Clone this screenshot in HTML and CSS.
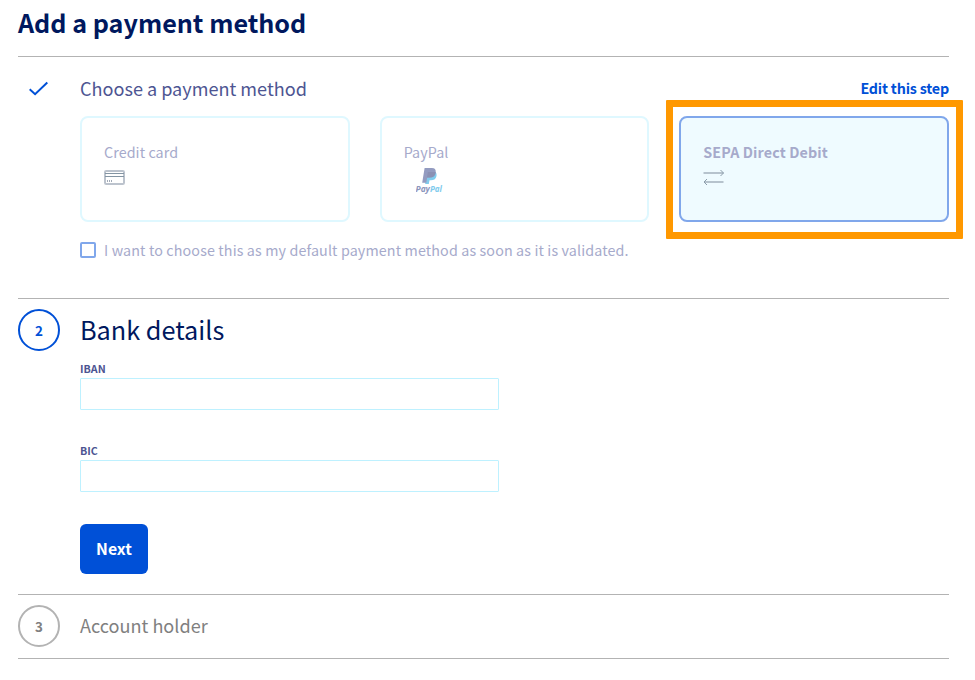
FILE: index.html
```html
<!DOCTYPE html>
<html lang="en">
<head>
<meta charset="utf-8">
<title>Add a payment method</title>
<link rel="stylesheet" href="styles.css">
</head>
<body>
<main>
  <h1><span>Add a payment method</span></h1>
  <section class="step step-choose">
    <div class="marker"><svg class="check" width="20" height="16" viewBox="0 0 20 16"><path d="M1.7 8.2 7.1 13.2 19.3 1.5" fill="none" stroke="#0050d7" stroke-width="2"/></svg></div>
    <div class="content">
      <div class="step-head"><h2 class="done-title"><span>Choose a payment method</span></h2><a class="edit"><span>Edit this step</span></a></div>
      <div class="cards">
        <div class="card"><div class="inner"><span class="name">Credit card</span>
          <svg class="icon" width="22" height="16" viewBox="0 0 22 16"><rect x="1" y="1" width="19" height="13" rx="1.2" fill="none" stroke="#bcc3cd" stroke-width="2"/><path d="M1 3.5h19M1 6.5h19" stroke="#8495a3"/><path d="M3.5 10v2M5.5 10v2M7.5 10v2" stroke="#a2abb8"/></svg></div></div>
        <div class="card"><div class="inner"><span class="name">PayPal</span>
          <svg class="paypal" width="30" height="28" viewBox="0 0 30 28"><path d="M10.5 4.5h8.5q2.3 2 1.3 5.2-1 3.6-5.4 3.6h-1.4l-.7 3.7H9.2z" fill="#80cbed"/><path d="M8.6 1h7.3q4.3 0 3.8 4.4-.9 5.1-6.2 5.1h-2.3l-.9 5.2H6.2z" fill="#939bc0"/><path d="M11.8 5h7.8q0 5.5-6.1 5.5h-2.6z" fill="#8b90b3"/><text x="-.5" y="25" textLength="14.5" lengthAdjust="spacingAndGlyphs" fill="#8b95bc">Pay</text><text x="14" y="25" textLength="12" lengthAdjust="spacingAndGlyphs" fill="#80cbed">Pal</text></svg></div></div>
        <div class="card selected"><div class="inner"><span class="name">SEPA Direct Debit</span>
          <svg class="icon" width="22" height="16" viewBox="0 0 22 16"><path d="M.5 4h20M1.5 13h19" stroke="#b6c3cd" stroke-width="2"/><path d="m17.5 1 3 3-3 3M4 10l-3 3 3 3" fill="none" stroke="#8c9dab"/></svg></div><div class="highlight"></div></div>
      </div>
      <label class="default"><input type="checkbox"><span>I want to choose this as my default payment method as soon as it is validated.</span></label>
    </div>
  </section>
  <section class="step step-bank">
    <div class="marker"><div class="circle">2</div></div>
    <div class="content">
      <h2 class="active-title"><span>Bank details</span></h2>
      <label class="field"><span>IBAN</span><input type="text"></label>
      <label class="field"><span>BIC</span><input type="text"></label>
      <button type="button"><span>Next</span></button>
    </div>
  </section>
  <section class="step step-holder">
    <div class="marker"><div class="circle idle">3</div></div>
    <div class="content"><h2 class="idle-title"><span>Account holder</span></h2></div>
  </section>
</main>
</body>
</html>
```
FILE: styles.css
```css
* { box-sizing: border-box; }
body { margin: 0; background: #fff; font-family: "Noto Sans CJK SC", "Open Sans", sans-serif; color: #00185e; }
main { padding: 0 26px 0 18px; }
h1, h2 { margin: 0; }
h1 { height: 56px; font-size: 25.15px; line-height: 45px; font-weight: 700; }
.step { display: grid; grid-template-columns: 42px 1fr; column-gap: 20px; border-top: 1px solid #b3b3b3; }
.step-choose { height: 242px; }
.step-bank { height: 296px; }
.step-holder { height: 65px; border-bottom: 1px solid #b3b3b3; }
.marker { padding-top: 10px; }
.check { display: block; margin: 14px 0 0 10px; }
.circle { width: 42px; height: 42px; border: 2px solid #0050d7; border-radius: 50%; color: #0050d7; font-size: 13.4px; font-weight: 700; line-height: 38px; text-align: center; }
.circle.idle { border-color: #b3b3b3; color: #808080; }
.step-head { height: 59px; display: flex; justify-content: space-between; line-height: 62px; }
.done-title { font-size: 18.08px; font-weight: 400; color: #4d5592; }
.edit { font-size: 14.3px; letter-spacing: -.19px; font-weight: 700; color: #0050d7; }
.cards { display: grid; grid-template-columns: repeat(3, 1fr); gap: 30px; }
.card { position: relative; height: 106px; padding: 23px 22px; border: 2px solid #dff8ff; border-radius: 8px; }
.inner { display: flex; flex-direction: column; align-items: flex-start; }
.name { font-size: 14.3px; letter-spacing: .08px; line-height: 22px; color: #a6aacb; }
.icon { margin-top: 7px; }
.paypal { margin: 4px 0 0 12px; font: italic 700 8px "Open Sans", sans-serif; }
.selected { background: #effbff; border-color: #80a7eb; }
.selected .name { font-weight: 700; letter-spacing: .12px; }
.selected .icon { margin-top: 6px; }
.highlight { position: absolute; inset: -18px -16px -19px -15px; border: 7px solid #ff9800; border-radius: 1px; }
.default { display: flex; align-items: center; margin-top: 17px; height: 22px; gap: 8px; font-size: 14.3px; letter-spacing: .125px; line-height: 22px; color: #a6aacb; }
.default input { appearance: none; width: 16px; height: 16px; margin: 0; border: 2px solid #80a7eb; border-radius: 2px; }
.active-title { height: 62px; line-height: 61px; font-size: 25.25px; font-weight: 400; }
.field { display: block; width: 419px; height: 82px; }
.field span { display: block; height: 17px; line-height: 15px; font-size: 10.7px; font-weight: 700; color: #4d5592; }
.field input { display: block; width: 419px; height: 32px; padding: 0 8px; border: 1px solid #bef1ff; border-radius: 1px; }
button { display: block; margin-top: -1px; width: 68px; height: 50px; padding: 0; border: 0; border-radius: 6px; background: #0050d7; color: #fff; font: 700 15.8px/50px "Noto Sans CJK SC", sans-serif; }
.idle-title { font-size: 18.08px; line-height: 60px; font-weight: 400; color: #808080; }
```
